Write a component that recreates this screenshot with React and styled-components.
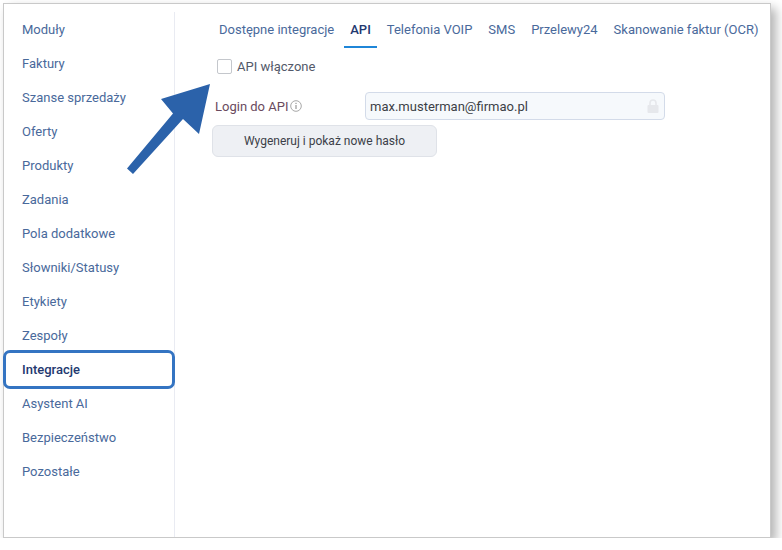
import React from 'react';
import styled, { createGlobalStyle } from 'styled-components';

const navItems = [
  'Moduły',
  'Faktury',
  'Szanse sprzedaży',
  'Oferty',
  'Produkty',
  'Zadania',
  'Pola dodatkowe',
  'Słowniki/Statusy',
  'Etykiety',
  'Zespoły',
  'Integracje',
  'Asystent AI',
  'Bezpieczeństwo',
  'Pozostałe',
];

const tabs = ['Dostępne integracje', 'API', 'Telefonia VOIP', 'SMS', 'Przelewy24', 'Skanowanie faktur (OCR)'];

const App = () => {
  return (
    <>
      <GlobalStyle />
      <Frame>
        <Sidebar>
          {navItems.map((item) => (
            <NavItem key={item} $active={item === 'Integracje'}>
              {item}
            </NavItem>
          ))}
        </Sidebar>
        <Content>
          <TabBar>
            {tabs.map((tab) => (
              <Tab key={tab} $active={tab === 'API'}>
                {tab}
              </Tab>
            ))}
          </TabBar>
          <CheckRow>
            <CheckBox />
            <CheckLabel>API włączone</CheckLabel>
          </CheckRow>
          <LoginRow>
            <LoginLabel>
              Login do API
              <InfoIcon viewBox="0 0 12 12">
                <circle cx="6" cy="6" r="5.3" fill="none" stroke="#a8a8a8" strokeWidth="1" />
                <rect x="5.4" y="5" width="1.2" height="4" fill="#979797" />
                <rect x="5.4" y="2.8" width="1.2" height="1.2" fill="#979797" />
              </InfoIcon>
            </LoginLabel>
            <LoginField>
              max.musterman@firmao.pl
              <LockIcon viewBox="0 0 12 14">
                <path d="M3 6V4a3 3 0 0 1 6 0v2" fill="none" stroke="#e6e8ec" strokeWidth="1.6" />
                <rect x="0.5" y="6" width="11" height="8" rx="1" fill="#e6e8ec" />
              </LockIcon>
            </LoginField>
          </LoginRow>
          <GenerateButton>Wygeneruj i pokaż nowe hasło</GenerateButton>
        </Content>
        <Arrow viewBox="0 0 90 95">
          <polygon points="0,84.5 46,29.5 34,15 83,0 72,50 56,35 6,90" fill="#2b62aa" />
        </Arrow>
      </Frame>
    </>
  );
};

const GlobalStyle = createGlobalStyle`
  html, body {
    margin: 0;
    padding: 0;
    background: #fff;
  }
  body {
    font-family: Roboto, "Liberation Sans", sans-serif;
  }
`;

const Frame = styled.div`
  position: relative;
  box-sizing: border-box;
  display: flex;
  width: 768px;
  height: 535px;
  margin: 3px 0 0 3px;
  padding-top: 8px;
  background: #fff;
  border: 1px solid #c9c9c9;
  box-shadow: 5px 5px 10px rgba(0, 0, 0, 0.3);
`;

const Sidebar = styled.nav`
  box-sizing: border-box;
  flex: 0 0 171px;
  display: flex;
  flex-direction: column;
  border-right: 1px solid #e9ebf2;
`;

const NavItem = styled.div`
  box-sizing: border-box;
  display: flex;
  align-items: center;
  height: ${(p) => (p.$active ? '39px' : '34px')};
  margin: ${(p) => (p.$active ? '-2.5px -1px -2.5px -1px' : '0')};
  padding-left: ${(p) => (p.$active ? '16px' : '18px')};
  font-size: 13px;
  font-weight: ${(p) => (p.$active ? 500 : 400)};
  color: ${(p) => (p.$active ? '#23386f' : '#49699b')};
  border: ${(p) => (p.$active ? '3px solid #3474c2' : 'none')};
  border-radius: ${(p) => (p.$active ? '7px' : '0')};
  background: #fff;
  position: ${(p) => (p.$active ? 'relative' : 'static')};
`;

const Content = styled.main`
  flex: 1;
  display: flex;
  flex-direction: column;
  align-items: flex-start;
  padding-left: 37px;
`;

const TabBar = styled.div`
  display: flex;
  gap: 4px;
  margin-left: 1px;
`;

const Tab = styled.div`
  box-sizing: border-box;
  height: 36px;
  padding: 1px 6px 0;
  display: flex;
  align-items: center;
  font-size: 13px;
  font-weight: ${(p) => (p.$active ? 500 : 400)};
  color: ${(p) => (p.$active ? '#23386f' : '#49699b')};
  border-bottom: 2px solid ${(p) => (p.$active ? '#1f86d8' : 'transparent')};
`;

const CheckRow = styled.label`
  display: flex;
  align-items: center;
  gap: 5px;
  margin: 11px 0 0 5px;
`;

const CheckBox = styled.span`
  box-sizing: border-box;
  width: 15px;
  height: 15px;
  background: #fff;
  border: 1px solid #c4c7cc;
  border-radius: 2px;
`;

const CheckLabel = styled.span`
  font-size: 13px;
  color: #53596a;
`;

const LoginRow = styled.div`
  display: flex;
  align-items: center;
  margin: 18px 0 0 3px;
`;

const LoginLabel = styled.div`
  display: flex;
  align-items: center;
  gap: 2px;
  width: 150px;
  font-size: 13px;
  color: #6a4a5e;
`;

const InfoIcon = styled.svg`
  width: 12px;
  height: 12px;
`;

const LoginField = styled.div`
  box-sizing: border-box;
  display: flex;
  align-items: center;
  justify-content: space-between;
  width: 300px;
  height: 28px;
  padding: 0 5px 0 4px;
  font-size: 13px;
  color: #3c3f46;
  background: #f6f9fc;
  border: 1px solid #d3dbe9;
  border-radius: 4px;
`;

const LockIcon = styled.svg`
  width: 12px;
  height: 14px;
`;

const GenerateButton = styled.button`
  box-sizing: border-box;
  width: 225px;
  height: 32px;
  margin-top: 5px;
  padding: 0;
  font-family: inherit;
  font-size: 12px;
  font-weight: 400;
  color: #3c4048;
  background: #eef0f4;
  border: 1px solid #dfe2e8;
  border-radius: 6px;
`;

const Arrow = styled.svg`
  position: absolute;
  left: 123px;
  top: 80px;
  width: 90px;
  height: 95px;
`;

export default App;
